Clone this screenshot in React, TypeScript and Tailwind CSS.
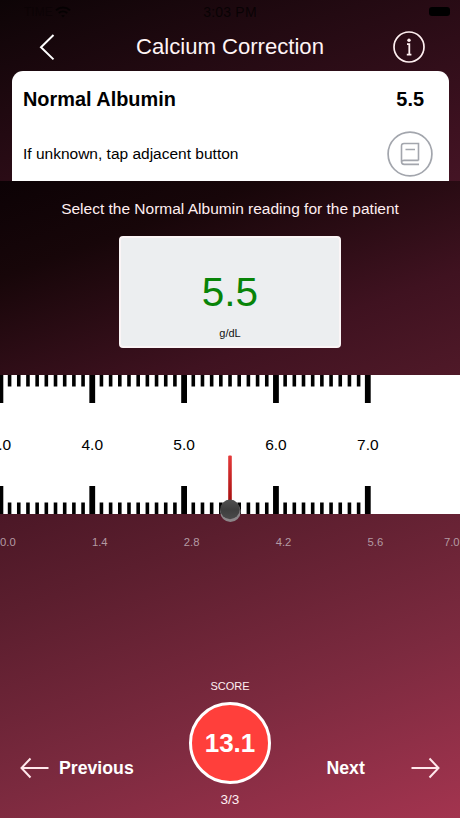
import React from "react";

const MAJOR_GAP = 91.85;
const RULER_START = 0.4;
const RULER_HEIGHT = 139;

const majorTicks = [
  { label: "3.0", index: 0 },
  { label: "4.0", index: 1 },
  { label: "5.0", index: 2 },
  { label: "6.0", index: 3 },
  { label: "7.0", index: 4 },
];

const minorTicks = Array.from({ length: 41 }, (_, i) => i).filter((i) => i % 10 !== 0);

const scaleLabels = ["0.0", "1.4", "2.8", "4.2", "5.6"];

function StatusBar() {
  return (
    <div className="relative flex h-6 items-center justify-between pr-[10px] pl-[24px] text-black/70">
      <div className="flex items-center gap-[2px]">
        <span className="text-[12px] leading-none opacity-40">TIME</span>
        <svg width="16" height="12" viewBox="0 0 16 12" fill="none" stroke="currentColor" strokeWidth="2">
          <path d="M1 4.2C5 0.6 11 0.6 15 4.2" />
          <path d="M3.8 7C6.2 5 9.8 5 12.2 7" />
          <path d="M6.2 9.6L8 11.4L9.8 9.6C8.8 8.8 7.2 8.8 6.2 9.6Z" fill="currentColor" stroke="none" />
        </svg>
      </div>
      <span className="absolute left-1/2 -translate-x-1/2 text-[14px] leading-none tracking-[0.2px] whitespace-nowrap">
        3:03 PM
      </span>
      <div className="-mt-px h-[9px] w-[21px] rounded-[3px] bg-black" />
    </div>
  );
}

function Header() {
  return (
    <header className="flex h-[47px] items-center justify-between pr-[34px] pb-[1px] pl-[37px]">
      <svg width="34" height="28" viewBox="0 0 34 28" fill="none" stroke="white" strokeWidth="2">
        <path d="M16.5 2L4 14.2L16.5 26.4" />
      </svg>
      <h1 className="-ml-[3px] text-[22.1px] leading-none text-[#fff4f5]">Calcium Correction</h1>
      <svg width="34" height="34" viewBox="0 0 34 34" fill="none" stroke="#fff0f1">
        <circle cx="17" cy="17" r="15" strokeWidth="1.7" />
        <circle cx="17" cy="10.3" r="1.7" fill="#fff0f1" stroke="none" />
        <path d="M15 14.2H17.3V24.5M14.8 24.7H19.4" strokeWidth="1.8" />
      </svg>
    </header>
  );
}

function AlbuminCard() {
  return (
    <section className="mr-[11px] ml-[12px] h-[110px] rounded-t-[11px] bg-white pr-[16px] pl-[11px] text-black">
      <div className="flex h-[56px] items-center justify-between pt-[2px] pr-[9px] text-[19.9px] font-bold">
        <span>Normal Albumin</span>
        <span>5.5</span>
      </div>
      <div className="flex h-[54px] items-center justify-between">
        <span className="text-[15.5px]">If unknown, tap adjacent button</span>
        <svg width="46" height="46" viewBox="0 0 46 46" fill="none" stroke="#a3a6ad" className="-mt-[1px]">
          <circle cx="23" cy="23" r="21.9" strokeWidth="1.7" />
          <path
            d="M31.5 29.5V12.5H17C15.3 12.5 14.5 13.3 14.5 15V30.5C14.5 32.4 15.4 33.4 17.2 33.4H32M14.5 30.6C14.8 29.8 15.6 29.4 17 29.4H31.5M18.5 18.5H28"
            strokeWidth="1.6"
          />
        </svg>
      </div>
    </section>
  );
}

function Ruler() {
  return (
    <svg width="460" height="150" viewBox="0 0 460 150" className="-mb-[11px] block">
      <defs>
        <linearGradient id="needle" x1="0" y1="0" x2="0" y2="1">
          <stop offset="0" stopColor="#e53a3a" />
          <stop offset="1" stopColor="#a30d0d" />
        </linearGradient>
        <linearGradient id="knob" x1="0" y1="0" x2="0" y2="1">
          <stop offset="0" stopColor="#505050" />
          <stop offset="0.5" stopColor="#3e3e3e" />
          <stop offset="1" stopColor="#4a4a4a" />
        </linearGradient>
      </defs>
      <rect width="460" height={RULER_HEIGHT} fill="white" />
      {minorTicks.map((i) => {
        const x = RULER_START + (i * MAJOR_GAP) / 10 - 1.8;
        return (
          <g key={i} fill="black">
            <rect x={x} y="0" width="3.6" height="11.5" />
            <rect x={x} y={RULER_HEIGHT - 11.5} width="3.6" height="11.5" />
          </g>
        );
      })}
      {majorTicks.map(({ label, index }) => {
        const x = RULER_START + index * MAJOR_GAP;
        return (
          <g key={label} fill="black">
            <rect x={x - 2.9} y="0" width="5.8" height="28" />
            <rect x={x - 2.9} y={RULER_HEIGHT - 28} width="5.8" height="28" />
            <text x={x} y="75.3" fontSize="15.5" textAnchor="middle">
              {label}
            </text>
          </g>
        );
      })}
      {/* Needle and its pivot */}
      <rect x="228.2" y="80.5" width="3.6" height="48" rx="1" fill="url(#needle)" />
      <circle cx="230.4" cy="136.8" r="10.2" fill="#8b8588" />
      <circle cx="230" cy="134.4" r="9.8" fill="url(#knob)" />
    </svg>
  );
}

function Footer() {
  return (
    <footer className="mt-auto grid h-[138px] grid-cols-[1fr_82px_1fr] text-white">
      <button className="mt-[78px] flex h-[20px] items-center gap-[10px] pl-[20px] text-[17.7px] font-bold">
        <svg width="29" height="22" viewBox="0 0 29 22" fill="none" stroke="#ffe8ec" strokeWidth="2">
          <path d="M10.5 1.5L1.5 11L10.5 20.5M1.5 11H28.5" />
        </svg>
        Previous
      </button>
      <div className="flex flex-col items-center">
        <span className="text-[11px] leading-[12px] text-[#ffeff2]">SCORE</span>
        <div className="mt-[10px] flex size-[82px] shrink-0 items-center justify-center rounded-full border-[3.5px] border-white bg-[#ff3f3b] text-[26px] font-bold">
          13.1
        </div>
        <span className="mt-[8px] text-[13.5px] leading-[16px] text-[#ffeff2]">3/3</span>
      </div>
      <button className="mt-[78px] flex h-[20px] items-center justify-between pr-[20px] pl-[55.5px] text-[17.7px] font-bold">
        Next
        <svg width="29" height="22" viewBox="0 0 29 22" fill="none" stroke="#ffe8ec" strokeWidth="2">
          <path d="M18.5 1.5L27.5 11L18.5 20.5M27.5 11H0.5" />
        </svg>
      </button>
    </footer>
  );
}

export default function App() {
  return (
    <div className="flex h-[818px] w-[460px] flex-col overflow-hidden bg-[linear-gradient(160deg,#0d0406_0%,#3d1120_30%,#66243a_60%,#a5334f_100%)] font-['Liberation_Sans',Arial,sans-serif]">
      <StatusBar />
      <Header />
      <AlbuminCard />
      <main className="flex flex-1 flex-col bg-[linear-gradient(160deg,#0c0205_0%,#170609_12%,#3f1220_32%,#5b1e2e_54%,#7c2a3f_77%,#a3344f_100%)]">
        <p className="mt-[18px] text-center text-[15.5px] leading-[20px] text-[#ffeef0]">
          Select the Normal Albumin reading for the patient
        </p>
        <div className="mx-auto mt-[17px] flex h-[112px] w-[222px] flex-col items-center rounded-[4px] border-2 border-[#fbf5f6] bg-[#eceef0]">
          <span className="mt-[31px] text-[40.5px] leading-[46px] text-[#088408]">5.5</span>
          <span className="mt-[12px] text-[11px] leading-[13px] text-[#111]">g/dL</span>
        </div>
        <div className="mt-[27px]">
          <Ruler />
        </div>
        <div className="mt-[21px] flex text-[11.3px] leading-[14px] text-[#b39aa3]">
          {scaleLabels.map((label) => (
            <span key={label} className="w-[91.9px] shrink-0">
              {label}
            </span>
          ))}
          <span className="-ml-[15.5px]">7.0</span>
        </div>
        <Footer />
      </main>
    </div>
  );
}
